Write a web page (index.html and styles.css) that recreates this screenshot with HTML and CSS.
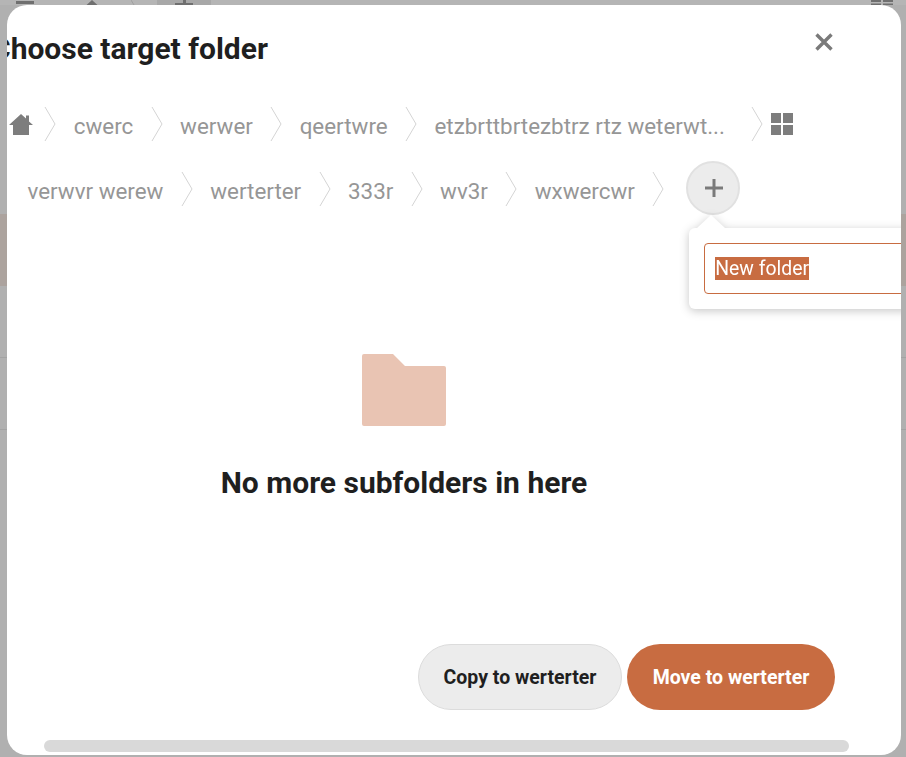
FILE: index.html
```html
<!DOCTYPE html>
<html lang="en">
<head>
<meta charset="utf-8">
<title>Choose target folder</title>
<link rel="stylesheet" href="styles.css">
</head>
<body>
<div class="backdrop">
  <div class="bg-toolbar">
    <span class="bg-burger"></span>
    <svg class="bg-home" viewBox="0 0 24 6" width="24" height="6"><path d="M12 0 0 11h24z" fill="#6f6f6f"/></svg>
    <svg class="bg-chev" viewBox="0 0 4 5" width="4" height="5"><path d="M0 0 3 5" stroke="#a0a0a0" fill="none"/></svg>
    <span class="bg-add"><span class="bg-add-v"></span><span class="bg-add-h"></span></span>
    <svg class="bg-grid" viewBox="0 0 22 5" width="22" height="5"><path d="M0 0H10V2H0ZM12 0H22V2H12ZM0 3.500H10V5H0ZM12 3.500H22V5H12Z" fill="#6f6f6f"/></svg>
  </div>
  <div class="bg-row bg-row-active"></div>
  <div class="bg-row bg-row-plain"></div>
  <div class="bg-row bg-row-plain"></div>
</div>
<main class="modal">
  <div class="scroller">
    <header class="head">
      <h1 class="title">Choose target folder</h1>
      <button class="close" aria-label="Close">
        <svg viewBox="0 0 18 18" width="18" height="18"><path d="M1.500 1.500 16.500 16.500M16.500 1.500 1.500 16.500" stroke="#7a7a7a" stroke-width="3.400" fill="none"/></svg>
      </button>
    </header>
    <nav class="crumbs crumbs-one">
      <svg class="home" viewBox="0 0 24 21" width="24" height="21"><path d="M12 0 17 4.600V1.500H20V7.400L24 11H20V21H4V11H0Z" fill="#7d7d7d"/></svg>
      <svg class="chev" viewBox="0 0 12 36" width="12" height="36"><path d="M1 1 11 18 1 35" fill="none" stroke="#d4d4d4" stroke-width="1"/></svg>
      <span class="crumb">cwerc</span>
      <svg class="chev" viewBox="0 0 12 36" width="12" height="36"><path d="M1 1 11 18 1 35" fill="none" stroke="#d4d4d4" stroke-width="1"/></svg>
      <span class="crumb">werwer</span>
      <svg class="chev" viewBox="0 0 12 36" width="12" height="36"><path d="M1 1 11 18 1 35" fill="none" stroke="#d4d4d4" stroke-width="1"/></svg>
      <span class="crumb">qeertwre</span>
      <svg class="chev" viewBox="0 0 12 36" width="12" height="36"><path d="M1 1 11 18 1 35" fill="none" stroke="#d4d4d4" stroke-width="1"/></svg>
      <span class="crumb crumb-long">etzbrttbrtezbtrz rtz weterwt...</span>
      <svg class="chev" viewBox="0 0 12 36" width="12" height="36"><path d="M1 1 11 18 1 35" fill="none" stroke="#d4d4d4" stroke-width="1"/></svg>
      <svg class="grid-icon" viewBox="0 0 22 22" width="22" height="22"><path d="M0 0H10V10H0ZM12 0H22V10H12ZM0 12H10V22H0ZM12 12H22V22H12Z" fill="#7d7d7d"/></svg>
    </nav>
    <nav class="crumbs crumbs-two">
      <span class="crumb">verwvr werew</span>
      <svg class="chev" viewBox="0 0 12 36" width="12" height="36"><path d="M1 1 11 18 1 35" fill="none" stroke="#d4d4d4" stroke-width="1"/></svg>
      <span class="crumb">werterter</span>
      <svg class="chev" viewBox="0 0 12 36" width="12" height="36"><path d="M1 1 11 18 1 35" fill="none" stroke="#d4d4d4" stroke-width="1"/></svg>
      <span class="crumb">333r</span>
      <svg class="chev" viewBox="0 0 12 36" width="12" height="36"><path d="M1 1 11 18 1 35" fill="none" stroke="#d4d4d4" stroke-width="1"/></svg>
      <span class="crumb">wv3r</span>
      <svg class="chev" viewBox="0 0 12 36" width="12" height="36"><path d="M1 1 11 18 1 35" fill="none" stroke="#d4d4d4" stroke-width="1"/></svg>
      <span class="crumb">wxwercwr</span>
      <svg class="chev" viewBox="0 0 12 36" width="12" height="36"><path d="M1 1 11 18 1 35" fill="none" stroke="#d4d4d4" stroke-width="1"/></svg>
      <span class="add-wrap">
        <button class="add" aria-label="New folder">
          <svg viewBox="0 0 18 18" width="18" height="18"><path d="M9 0V18M0 9H18" stroke="#7a7a7a" stroke-width="3" fill="none"/></svg>
        </button>
        <span class="popover">
          <span class="popover-arrow"></span>
          <span class="field"><span class="field-sel">New folder</span></span>
        </span>
      </span>
    </nav>
    <section class="empty">
      <svg class="folder" viewBox="0 0 84 72" width="84" height="72"><path d="M2 0H31L43 12H82a2 2 0 0 1 2 2V70a2 2 0 0 1-2 2H2a2 2 0 0 1-2-2V2a2 2 0 0 1 2-2Z" fill="#e9c4b3"/></svg>
      <p class="empty-text">No more subfolders in here</p>
    </section>
    <footer class="actions">
      <button class="btn btn-copy">Copy to werterter</button>
      <button class="btn btn-move">Move to werterter</button>
    </footer>
  </div>
  <div class="scroll-thumb"></div>
</main>
</body>
</html>
```
FILE: styles.css
```css
* { box-sizing: border-box; }
html, body { margin: 0; height: 100%; }
body {
  position: relative;
  width: 906px;
  height: 757px;
  overflow: hidden;
  background: #b0b0b0;
  font-family: Roboto, "Liberation Sans", sans-serif;
  color: #1f1f1f;
}
button { font-family: inherit; }

.backdrop { position: absolute; inset: 0; }
.bg-toolbar {
  position: absolute; top: 0; left: 0; right: 0; height: 5px;
  background: #b5b5b5;
}
.bg-burger { position: absolute; left: 16px; top: 1px; width: 18px; height: 3px; background: #6f6f6f; }
.bg-home { position: absolute; left: 80px; top: 0; }
.bg-chev { position: absolute; left: 131px; top: 0; }
.bg-add { position: absolute; left: 157px; top: 0; width: 54px; height: 5px; background: #a8a8a8; }
.bg-add-v { position: absolute; left: 26px; top: 0; width: 3px; height: 5px; background: #6f6f6f; }
.bg-add-h { position: absolute; left: 18px; top: 3px; width: 18px; height: 2px; background: #6f6f6f; }
.bg-grid { position: absolute; left: 871px; top: 0; }
.bg-row { position: absolute; left: 0; right: 0; }
.bg-row-active { top: 214px; height: 72px; background: #aca39e; }
.bg-row-plain { height: 72px; border-bottom: 1px solid #a3a3a3; }
.bg-row-plain:nth-child(3) { top: 286px; }
.bg-row-plain:nth-child(4) { top: 358px; }

.modal {
  position: absolute;
  left: 7px; top: 5px;
  width: 894px; height: 750px;
  background: #fff;
  border-radius: 20px;
  overflow: hidden;
}
.scroller { width: 880px; height: 750px; margin-left: -17px; }

.head { display: flex; justify-content: space-between; align-items: flex-start; height: 101px; padding: 27px 0 0 1px; }
.title { margin: 0; font-size: 30px; line-height: 34px; font-weight: 700; color: #1f1f1f; }
.close { border: 0; background: none; padding: 0; margin: 1px 37px 0 0; width: 18px; height: 18px; display: block; }
.close svg { display: block; }

.crumbs { display: flex; align-items: center; height: 36px; }
.crumbs-one { padding-left: 19px; }
.crumbs-two { margin-top: 29px; padding-left: 37.5px; }
.crumb { font-size: 22.4px; line-height: 36px; color: #969696; white-space: nowrap; margin-top: 3px; }
.chev { display: block; flex: none; margin: 0 17.4px; }
.crumb-long { margin-right: 9px; }
.crumbs-one .home { display: block; flex: none; margin: 1px -6px 0 0; }
.crumbs-one .home + .chev { margin-left: 17.4px; }
.grid-icon { display: block; flex: none; margin: 0 0 0 -9.4px; }

.add-wrap { position: relative; display: block; width: 54px; height: 54px; margin: -2px 0 0 4.6px; }
.add {
  display: flex; align-items: center; justify-content: center;
  width: 54px; height: 54px; padding: 0 0 0 1px;
  border-radius: 50%;
  background: #ececec;
  border: 2px solid #e1e1e1;
}
.popover {
  position: absolute;
  left: 3px; top: 67px;
  display: block;
  width: 260px; height: 81px;
  background: #fff;
  border-radius: 6px;
  filter: drop-shadow(0 2px 5px rgba(0,0,0,.22));
  padding: 15px;
}
.popover-arrow {
  position: absolute;
  left: 8px; top: -13px;
  width: 0; height: 0;
  border-left: 14px solid transparent;
  border-right: 14px solid transparent;
  border-bottom: 13px solid #fff;
}
.field {
  display: block;
  height: 51px;
  width: 240px;
  border: 1px solid #c86c41;
  border-radius: 4px;
  padding: 13px 10px 0;
  font-size: 19.4px;
  line-height: 23px;
  color: #fff;
}
.field-sel { background: #c86c41; display: inline-block; line-height: 23px; }

.empty { width: 828px; display: flex; flex-direction: column; align-items: center; }
.folder { display: block; margin-top: 147px; }
.empty-text { margin: 40px 0 0; font-size: 30px; line-height: 34px; font-weight: 700; color: #1f1f1f; }

.actions { position: absolute; right: 66px; top: 639px; display: flex; gap: 5px; }
.btn {
  height: 66px;
  border-radius: 33px;
  font-size: 19.5px;
  font-weight: 700;
  padding: 0;
}
.btn-copy { width: 204px; background: #ececec; border: 1px solid #dcdcdc; color: #1f1f1f; }
.btn-move { width: 208px; background: #c86c41; border: 0; color: #fff; }

.scroll-thumb {
  position: absolute;
  left: 37px; top: 735px;
  width: 805px; height: 12px;
  background: #d9d9d9;
  border-radius: 6px;
}
```
